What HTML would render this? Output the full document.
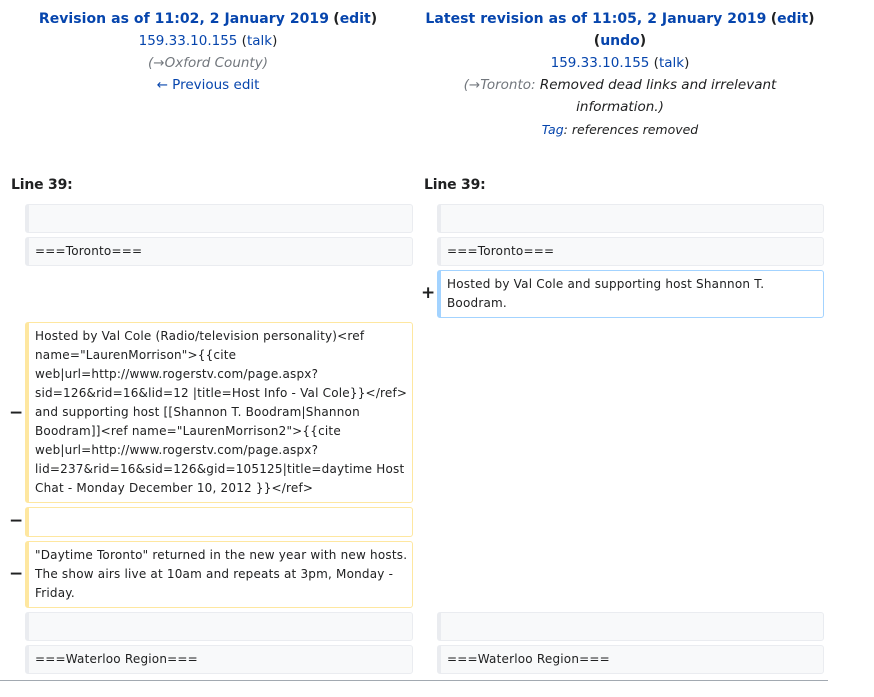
<!DOCTYPE html>
<html><head><meta charset="utf-8"><style>
*{margin:0;padding:0;box-sizing:border-box}
body{width:874px;height:697px;background:#fff;font-family:"DejaVu Sans","Liberation Sans",sans-serif;color:#202122;position:relative;overflow:hidden}
.h{position:absolute;text-align:center;white-space:nowrap;font-size:13.5px;line-height:22px}
a{color:#0645ad;text-decoration:none}
.b{font-weight:bold;font-size:14px}
.i{font-style:italic}
.g{color:#72777d}
.ln{position:absolute;font-weight:bold;font-size:14px;letter-spacing:-0.2px}
.box{position:absolute;border:1px solid #eaecf0;border-left:4px solid #eaecf0;border-radius:3px;background:#f8f9fa;font-size:12px;line-height:19px;padding:4px 0 4px 6px;white-space:nowrap;letter-spacing:0.2px}
.del{background:#fff;border-color:#fee7a0;border-left-color:#fee7a0}
.add{background:#fff;border-color:#a3d3ff;border-left-color:#a3d3ff}
.m{position:absolute;font-size:17px;font-weight:bold;left:9px}
</style></head><body>
<div class="h" style="left:0;width:416px;top:8px">
<div><a class="b" style="letter-spacing:0.05px">Revision as of 11:02, 2 January 2019</a> <span class="b">(<a>edit</a>)</span></div>
<div><a>159.33.10.155</a> (<a>talk</a>)</div>
<div class="i g">(→Oxford County)</div>
<div><a>← Previous edit</a></div>
</div>
<div class="h" style="left:416px;width:408px;top:8px">
<div><a class="b" style="letter-spacing:0.05px">Latest revision as of 11:05, 2 January 2019</a> <span class="b">(<a>edit</a>)</span></div>
<div class="b">(<a>undo</a>)</div>
<div><a>159.33.10.155</a> (<a>talk</a>)</div>
<div class="i"><span class="g">(→Toronto: </span> Removed dead links and irrelevant</div>
<div class="i">information.)</div>
<div class="i" style="font-size:12.5px;line-height:24px"><a>Tag</a>: references removed</div>
</div>
<div class="ln" style="left:11px;top:177px">Line 39:</div>
<div class="ln" style="left:424px;top:177px">Line 39:</div>

<div class="box" style="left:25px;top:204px;width:388px;height:29px"></div>
<div class="box" style="left:437px;top:204px;width:387px;height:29px"></div>
<div class="box" style="left:25px;top:237px;width:388px;height:29px">===Toronto===</div>
<div class="box" style="left:437px;top:237px;width:387px;height:29px">===Toronto===</div>

<div class="m" style="left:421px;top:283px">+</div>
<div class="box add" style="left:437px;top:270px;width:387px;height:48px">Hosted by Val Cole and supporting host Shannon T.<br>Boodram.</div>

<div class="m" style="top:403px">−</div>
<div class="box del" style="left:25px;top:322px;width:388px;height:181px">Hosted by Val Cole (Radio/television personality)&lt;ref<br>name="LaurenMorrison"&gt;{{cite<br>web|url=http://www.rogerstv.com/page.aspx?<br>sid=126&amp;rid=16&amp;lid=12 |title=Host Info - Val Cole}}&lt;/ref&gt;<br>and supporting host [[Shannon T. Boodram|Shannon<br>Boodram]]&lt;ref name="LaurenMorrison2"&gt;{{cite<br>web|url=http://www.rogerstv.com/page.aspx?<br>lid=237&amp;rid=16&amp;sid=126&amp;gid=105125|title=daytime Host<br>Chat - Monday December 10, 2012 }}&lt;/ref&gt;</div>
<div class="m" style="top:511px">−</div>
<div class="box del" style="left:25px;top:507px;width:388px;height:30px"></div>
<div class="m" style="top:564px">−</div>
<div class="box del" style="left:25px;top:541px;width:388px;height:67px">"Daytime Toronto" returned in the new year with new hosts.<br>The show airs live at 10am and repeats at 3pm, Monday -<br>Friday.</div>

<div class="box" style="left:25px;top:612px;width:388px;height:29px"></div>
<div class="box" style="left:437px;top:612px;width:387px;height:29px"></div>
<div class="box" style="left:25px;top:645px;width:388px;height:29px">===Waterloo Region===</div>
<div class="box" style="left:437px;top:645px;width:387px;height:29px">===Waterloo Region===</div>
<div style="position:absolute;left:0;top:680px;width:828px;height:1px;background:#a2a9b1"></div>
</body></html>
